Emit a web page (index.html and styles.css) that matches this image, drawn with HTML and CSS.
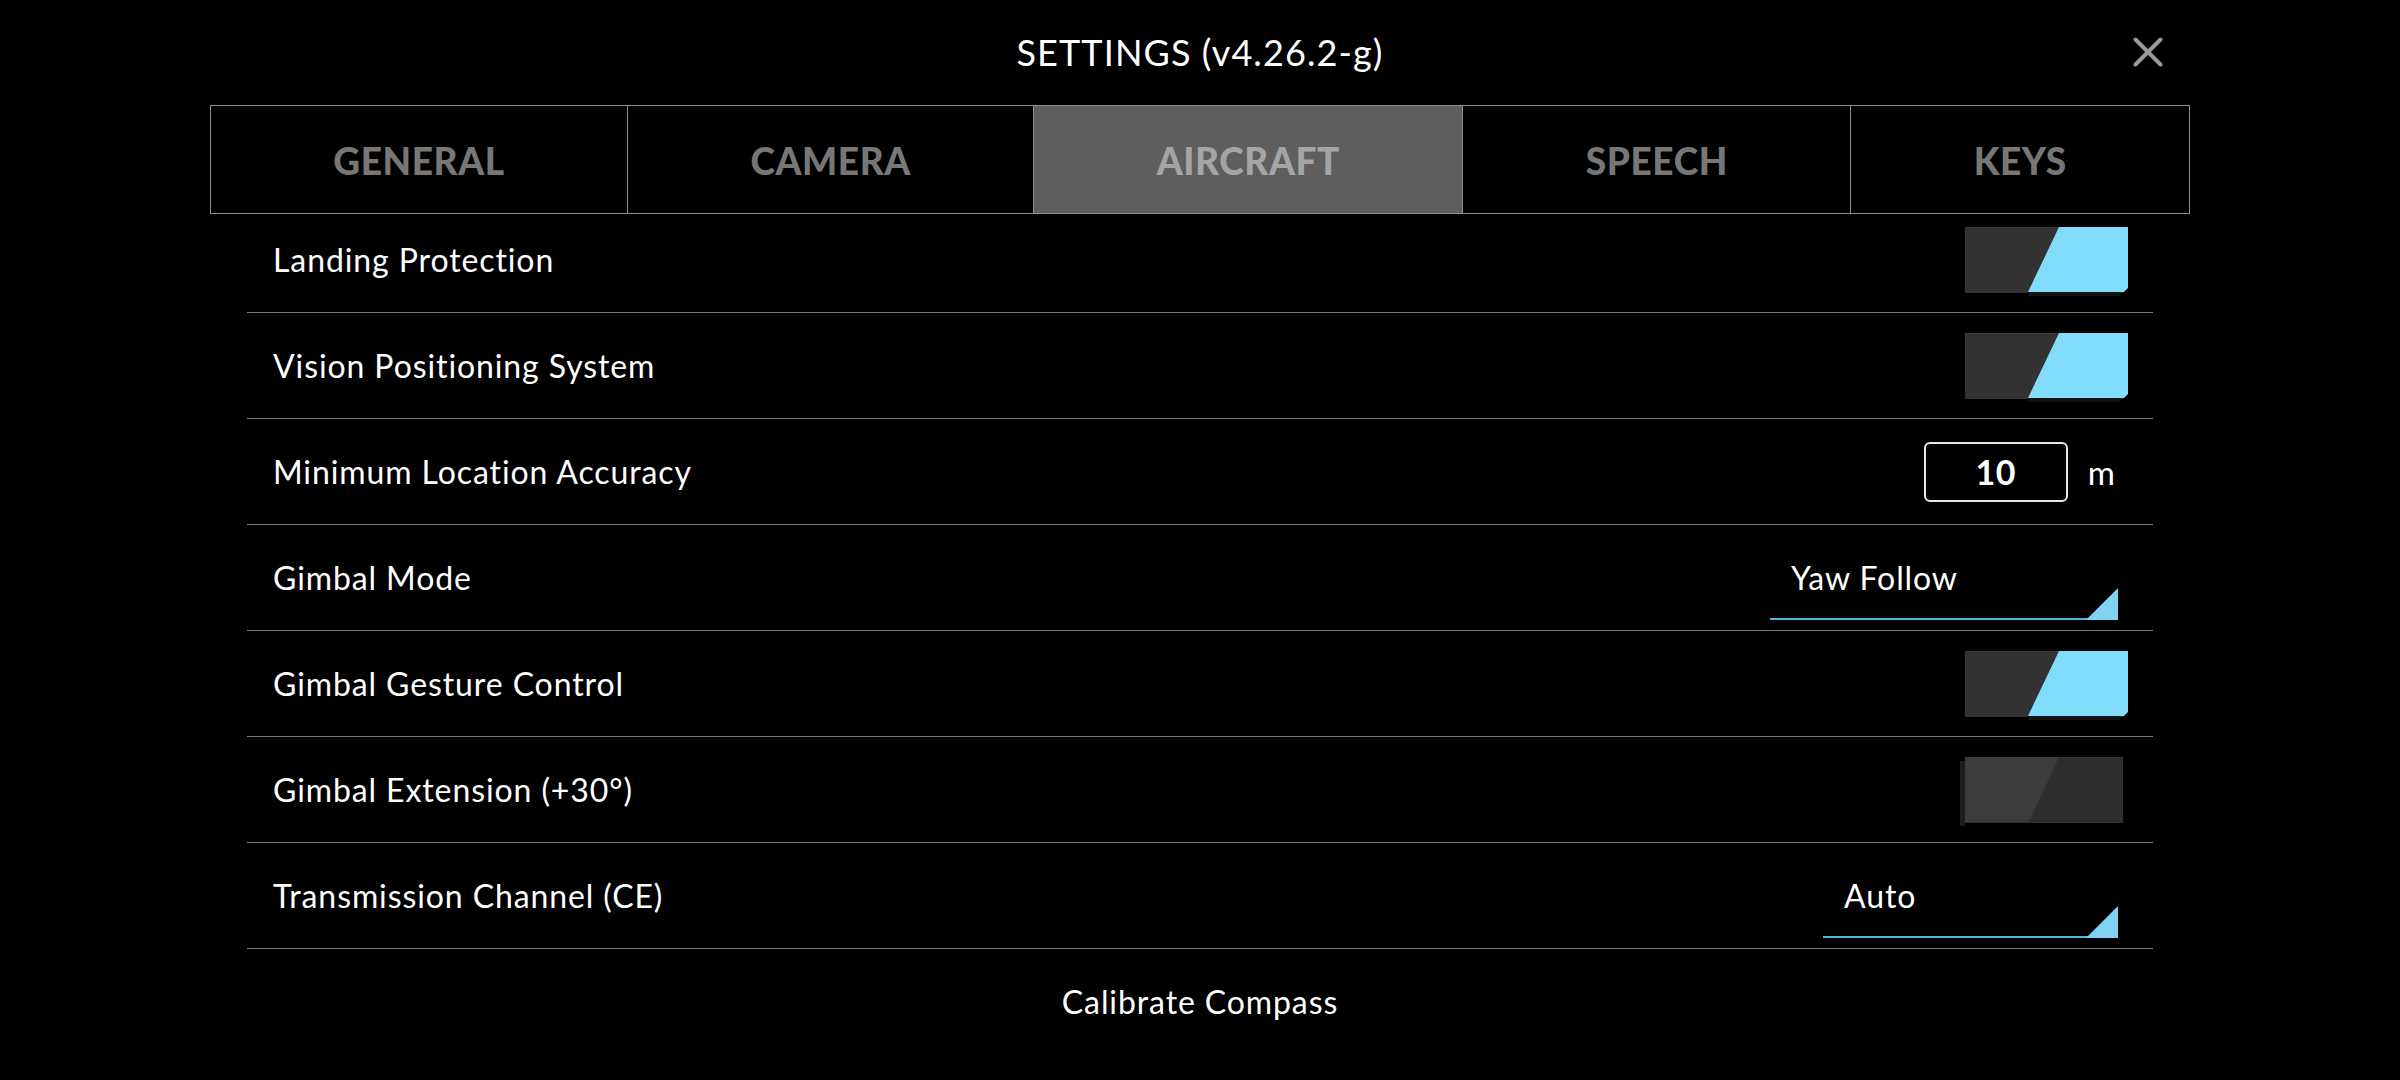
FILE: index.html
```html
<!DOCTYPE html>
<html lang="en">
<head>
<meta charset="utf-8">
<title>Settings</title>
<link rel="stylesheet" href="styles.css">
</head>
<body>
<div class="screen">
  <header class="header">
    <h1 class="title">SETTINGS (v4.26.2-g)</h1>
    <button class="close" aria-label="Close">
      <svg viewBox="0 0 30 30" width="30" height="30"><path d="M2.5 2.5 L27.5 27.5 M27.5 2.5 L2.5 27.5" stroke="#9a9a9a" stroke-width="4" stroke-linecap="round" fill="none"/></svg>
    </button>
  </header>
  <nav class="tabs">
    <div class="tab">GENERAL</div>
    <div class="tab">CAMERA</div>
    <div class="tab active">AIRCRAFT</div>
    <div class="tab">SPEECH</div>
    <div class="tab">KEYS</div>
  </nav>
  <main class="list">
    <div class="row">
      <span class="label">Landing Protection</span>
      <div class="toggle on"><span class="knob"></span></div>
    </div>
    <div class="row">
      <span class="label">Vision Positioning System</span>
      <div class="toggle on"><span class="knob"></span></div>
    </div>
    <div class="row">
      <span class="label">Minimum Location Accuracy</span>
      <div class="numfield">
        <div class="numbox">10</div>
        <span class="unit">m</span>
      </div>
    </div>
    <div class="row">
      <span class="label">Gimbal Mode</span>
      <div class="dropdown wide">Yaw Follow<span class="tri"></span></div>
    </div>
    <div class="row">
      <span class="label">Gimbal Gesture Control</span>
      <div class="toggle on"><span class="knob"></span></div>
    </div>
    <div class="row">
      <span class="label">Gimbal Extension (+30°)</span>
      <div class="toggle off"><span class="knob"></span></div>
    </div>
    <div class="row">
      <span class="label">Transmission Channel (CE)</span>
      <div class="dropdown narrow">Auto<span class="tri"></span></div>
    </div>
    <div class="action">Calibrate Compass</div>
  </main>
</div>
</body>
</html>
```
FILE: styles.css
```css
* { box-sizing: border-box; }
html, body {
  margin: 0;
  padding: 0;
  background: #000;
}
body {
  font-family: "Lato", "Liberation Sans", sans-serif;
  color: #fff;
  width: 2400px;
  height: 1080px;
  overflow: hidden;
}
.screen {
  display: flex;
  flex-direction: column;
  align-items: center;
}
.header {
  position: relative;
  width: 100%;
  height: 105px;
  display: flex;
  align-items: center;
  justify-content: center;
}
.title {
  margin: 0 0 2px 0;
  font-weight: 400;
  font-size: 36px;
  letter-spacing: 1.1px;
  color: #fff;
}
.close {
  position: absolute;
  left: 2133px;
  top: 37px;
  width: 30px;
  height: 30px;
  padding: 0;
  border: 0;
  background: none;
}
.close svg { display: block; }
.tabs {
  display: flex;
  border: 1px solid #8c8c8c;
  height: 109px;
  position: relative;
  z-index: 1;
}
.tab {
  display: flex;
  align-items: center;
  justify-content: center;
  padding: 2px 122.4px 0;
  font-weight: 900;
  font-size: 37px;
  letter-spacing: 0.6px;
  color: #777;
}
.tab + .tab { border-left: 1px solid #8c8c8c; }
.tab.active {
  background: #5e5e5e;
  color: #a5a5a5;
}
.list {
  width: 1906px;
  margin-top: -7px;
  display: flex;
  flex-direction: column;
}
.row {
  height: 106px;
  border-bottom: 1px solid #7a7a7a;
  display: flex;
  align-items: center;
  justify-content: space-between;
  padding: 0 25px 0 26px;
}
.label {
  font-size: 32px;
  letter-spacing: 0.9px;
  color: #fff;
}
.toggle {
  position: relative;
  width: 163px;
  height: 65px;
}
.toggle::before {
  content: "";
  position: absolute;
  left: 0;
  top: 0;
  width: 158px;
  height: 65px;
  background: #323232;
  border-top: 1px solid #3a3a3a;
}
.toggle .knob {
  position: absolute;
  top: 0;
  height: 65px;
}
.toggle.on .knob {
  left: 63px;
  width: 100px;
  background: #82dcfc;
  clip-path: polygon(31px 0, 100% 0, 100% 61px, 96px 100%, 0 100%);
}
.toggle.on::after {
  content: "";
  position: absolute;
  left: 63px;
  top: 65px;
  width: 92px;
  height: 4px;
  background: #121212;
}
.toggle.off::before { width: 158px; background: #2e2e2e; border-top: 1px solid #333; }
.toggle.off .knob {
  left: 0;
  width: 94px;
  background: #3c3c3c;
  clip-path: polygon(0 0, 100% 0, 64px 100%, 0 100%);
}
.toggle.off::after {
  content: "";
  position: absolute;
  left: -5px;
  top: 4px;
  width: 5px;
  height: 65px;
  background: #1d1d1d;
}
.numfield {
  display: flex;
  align-items: center;
  gap: 20px;
  margin-right: 13px;
}
.numbox {
  width: 144px;
  height: 60px;
  border: 2px solid #e6e6e6;
  border-radius: 6px;
  display: flex;
  align-items: center;
  justify-content: center;
  font-weight: 700;
  font-size: 34px;
  letter-spacing: 0.5px;
  color: #fff;
}
.unit {
  font-size: 33px;
  color: #fff;
}
.dropdown {
  position: relative;
  align-self: flex-end;
  margin-bottom: 10px;
  margin-right: 10px;
  height: 64px;
  padding: 0 0 20px 21px;
  display: flex;
  align-items: center;
  border-bottom: 2px solid #54b4dc;
  font-size: 32px;
  letter-spacing: 0.9px;
  color: #fff;
}
.dropdown.wide { width: 348px; }
.dropdown.narrow { width: 295px; }
.tri {
  position: absolute;
  right: 0;
  bottom: -2px;
  width: 32px;
  height: 32px;
  background: #80d4f2;
  clip-path: polygon(100% 0, 100% 100%, 0 100%);
}
.action {
  height: 104px;
  display: flex;
  align-items: center;
  justify-content: center;
  font-size: 32px;
  letter-spacing: 0.9px;
  color: #fff;
}
```
